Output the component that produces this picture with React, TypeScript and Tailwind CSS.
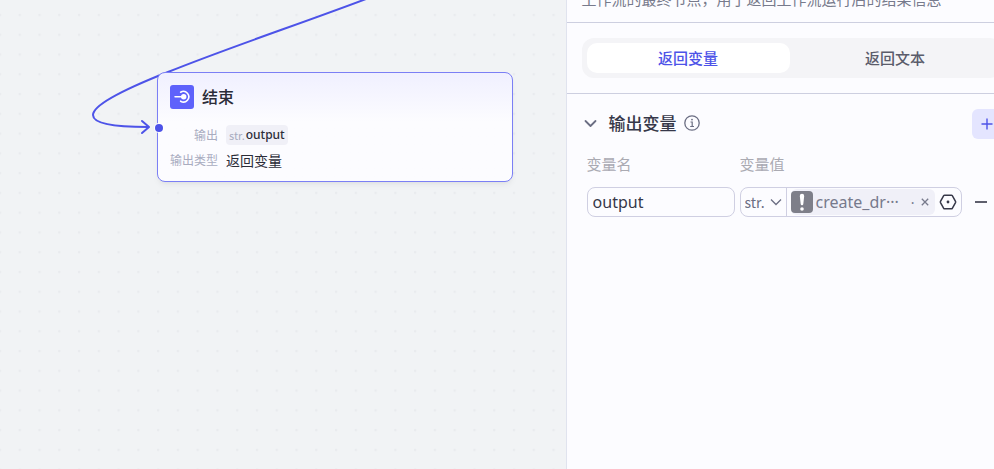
import React, { useState } from 'react';

const EndIcon: React.FC = () => (
  <svg viewBox="0 0 24 24" className="h-6 w-6 shrink-0" fill="none">
    <rect width="24" height="24" rx="3" fill="#5e62fb" />
    <path d="M5 11.7h8" stroke="#fff" strokeWidth="1.5" strokeLinecap="round" />
    <circle cx="13.7" cy="11.7" r="2.7" fill="#fff" />
    <path
      d="M10.6 7.2A5.3 5.3 0 1 1 10.6 16.2"
      stroke="#fff"
      strokeWidth="1.6"
      strokeLinecap="round"
    />
  </svg>
);

const CanvasBackdrop: React.FC = () => (
  <svg className="absolute inset-0 h-full w-full" aria-hidden="true">
    <defs>
      <pattern
        id="dots"
        x="-10"
        y="5"
        width="19.77"
        height="19.77"
        patternUnits="userSpaceOnUse"
      >
        <circle cx="10" cy="10" r="1.3" fill="#e9ebee" />
      </pattern>
    </defs>
    <rect width="100%" height="100%" fill="url(#dots)" />
    <g
      fill="none"
      stroke="#4d53e8"
      strokeWidth="2"
      strokeLinecap="round"
      strokeLinejoin="round"
    >
      <path d="M366 -1C300 24 230 47 168 72C130 87 93 104 93 115C93 125 120 127 148 127" />
      <path d="M142 121L149 127L142 133" />
    </g>
  </svg>
);

const EndNode: React.FC = () => (
  <section className="absolute top-[72px] left-[157px] w-[356px] rounded-lg border border-[#7b7ff5] bg-[#fcfcff] bg-linear-to-b from-[#f0f0ff] to-[#fcfcff] to-45% px-3 pt-3 pb-2.5 shadow-md shadow-black/5">
    <header className="flex items-center gap-2">
      <EndIcon />
      <h2 className="pb-0.5 text-[16px] leading-[22px] font-medium text-[#2b2c38]">
        结束
      </h2>
    </header>
    <dl className="mt-4 grid grid-cols-[48px_1fr] items-center gap-x-2 gap-y-1 text-[#a9acbf]">
      <dt className="text-right text-[12px] leading-5">输出</dt>
      <dd className="flex">
        <span className="flex h-5 items-center gap-px rounded bg-[#f0f0f7] px-[3px]">
          <span className="text-[11px]">str.</span>
          <span className="font-['Noto_Sans'] text-[12px] font-medium text-[#2b2c38]">
            output
          </span>
        </span>
      </dd>
      <dt className="text-right text-[12px] leading-[22px]">输出类型</dt>
      <dd className="text-[14px] leading-[22px] text-[#2b2c38]">返回变量</dd>
    </dl>
    <span className="absolute top-[51px] -left-[3px] h-2 w-2 rounded-full bg-[#4d53e8] ring-1 ring-white" />
  </section>
);

const tabs = ['返回变量', '返回文本'];

const SettingsPanel: React.FC = () => {
  const [activeTab, setActiveTab] = useState(tabs[0]);
  const [name, setName] = useState('output');

  return (
    <aside className="flex-1 overflow-hidden border-l border-[#e0e3ee] bg-[#fcfcff]">
      <div className="min-w-[450px]">
        <div className="h-[23px] overflow-hidden border-b border-[#cdcfe0] px-[15px]">
          <p className="-mt-[11px] text-[15px] leading-5 text-[#777a8c]">
            工作流的最终节点，用于返回工作流运行后的结果信息
          </p>
        </div>
        <div className="border-b border-[#cdcfe0] px-[15px] py-[15px]">
          <div
            role="tablist"
            className="flex h-10 gap-1 rounded-xl bg-[#f4f4f7] p-[5px]"
          >
            {tabs.map((tab) => (
              <button
                key={tab}
                role="tab"
                aria-selected={tab === activeTab}
                onClick={() => setActiveTab(tab)}
                className={
                  tab === activeTab
                    ? 'flex-1 rounded-[10px] bg-white text-[15px] font-medium text-[#4d53e8]'
                    : 'flex-1 rounded-[10px] text-[15px] font-medium text-[#5a5c6b]'
                }
              >
                {tab}
              </button>
            ))}
          </div>
        </div>

        <div className="px-[15px] py-[15px]">
          <div className="flex items-center">
            <button aria-label="收起" className="text-[#6b6e83]">
              <svg viewBox="0 0 16 16" className="h-4 w-4" fill="none">
                <path
                  d="M3.5 5L8.5 10L13.5 5"
                  stroke="currentColor"
                  strokeWidth="1.8"
                  strokeLinecap="round"
                  strokeLinejoin="round"
                />
              </svg>
            </button>
            <h3 className="ml-[11px] pb-0.5 text-[17px] leading-7 font-medium text-[#363849]">
              输出变量
            </h3>
            <svg
              viewBox="0 0 16 16"
              className="mb-0.5 ml-[7px] h-4 w-4 text-[#6b6e83]"
              fill="none"
              stroke="currentColor"
            >
              <circle cx="8" cy="8" r="7.2" strokeWidth="1.3" />
              <path d="M6.5 7H8.2V11.3M6.2 11.5H10" strokeWidth="1.2" />
              <circle cx="8" cy="4.6" r="0.9" fill="currentColor" stroke="none" />
            </svg>
            <button
              aria-label="添加变量"
              className="ml-auto flex h-[30px] w-[30px] items-center justify-center rounded-md bg-[#e4e5ff] text-[#4d53e8]"
            >
              <svg viewBox="0 0 12 12" className="h-3 w-3">
                <path d="M6 0.5V11.5M0.5 6H11.5" stroke="currentColor" strokeWidth="1.4" />
              </svg>
            </button>
          </div>

          <div className="mt-3.5 ml-[5px] grid grid-cols-[148px_222px_1fr] gap-x-[5px] gap-y-3">
            <label
              htmlFor="var-name"
              className="text-[15px] leading-[22px] text-[#aaaab2]"
            >
              变量名
            </label>
            <label
              htmlFor="var-type"
              className="text-[15px] leading-[22px] text-[#aaaab2]"
            >
              变量值
            </label>
            <span />
            <input
              id="var-name"
              value={name}
              onChange={(e) => setName(e.target.value)}
              className="h-[30px] min-w-0 rounded-lg border border-[#cfcfe2] px-[5px] font-['Noto_Sans'] text-[16px] text-[#363849] outline-none"
            />
            <div className="flex h-[30px] rounded-lg border border-[#cfcfe2]">
              <div className="relative w-[46px] border-r border-[#cfcfe2]">
                <select
                  id="var-type"
                  className="h-full w-full appearance-none pl-1 text-[14px] text-[#6b6e83] outline-none"
                >
                  <option>str.</option>
                </select>
                <svg
                  viewBox="0 0 12 8"
                  className="pointer-events-none absolute top-2.5 right-1 h-2 w-3 text-[#6b6e83]"
                  fill="none"
                >
                  <path d="M1 1.5L6 6.5L11 1.5" stroke="currentColor" strokeWidth="1.3" />
                </svg>
              </div>
              <div className="my-px ml-1 flex flex-1 items-center rounded-md bg-[#f0f0f8] font-['Noto_Sans'] text-[#777a8c]">
                <svg viewBox="0 0 22 22" className="h-[22px] w-[22px] shrink-0">
                  <rect width="22" height="22" rx="4" fill="#7e7f89" />
                  <path d="M8.8 5A2.2 2.2 0 0 1 13.2 5L12.3 13A1.3 1.3 0 0 1 9.7 13Z" fill="#fff" />
                  <circle cx="11" cy="18" r="1.8" fill="#fff" />
                </svg>
                <span className="ml-[3px] text-[16px]">create_dr···</span>
                <span className="ml-auto text-[14px]">·</span>
                <button aria-label="清除" className="mx-1.5">
                  <svg viewBox="0 0 8 8" className="h-2 w-2">
                    <path d="M0.8 0.8L7.2 7.2M7.2 0.8L0.8 7.2" stroke="currentColor" strokeWidth="1.3" />
                  </svg>
                </button>
              </div>
              <button
                aria-label="选择变量"
                className="flex w-[26px] items-center justify-center text-[#363849]"
              >
                <svg viewBox="0 0 18 18" className="h-[18px] w-[18px]" fill="none">
                  <path
                    d="M5.6 2.2H12.4Q13 2.2 13.3 2.7L16.5 8.4Q16.8 9 16.5 9.6L13.3 15.3Q13 15.8 12.4 15.8H5.6Q5 15.8 4.7 15.3L1.5 9.6Q1.2 9 1.5 8.4L4.7 2.7Q5 2.2 5.6 2.2Z"
                    stroke="currentColor"
                    strokeWidth="1.5"
                  />
                  <circle cx="9" cy="9" r="1.4" fill="currentColor" />
                </svg>
              </button>
            </div>
            <button
              aria-label="删除变量"
              className="flex items-center pl-2 text-[#363849]"
            >
              <svg viewBox="0 0 12 12" className="h-3 w-3">
                <path d="M0 6H12" stroke="currentColor" strokeWidth="1.6" />
              </svg>
            </button>
          </div>
        </div>
      </div>
    </aside>
  );
};

const App: React.FC = () => {
  return (
    <div className="flex h-screen overflow-hidden font-['Noto_Sans_CJK_SC',sans-serif]">
      <main className="relative w-[56.9%] overflow-hidden bg-[#f1f3f5]">
        <CanvasBackdrop />
        <EndNode />
      </main>
      <SettingsPanel />
    </div>
  );
};

export default App;
